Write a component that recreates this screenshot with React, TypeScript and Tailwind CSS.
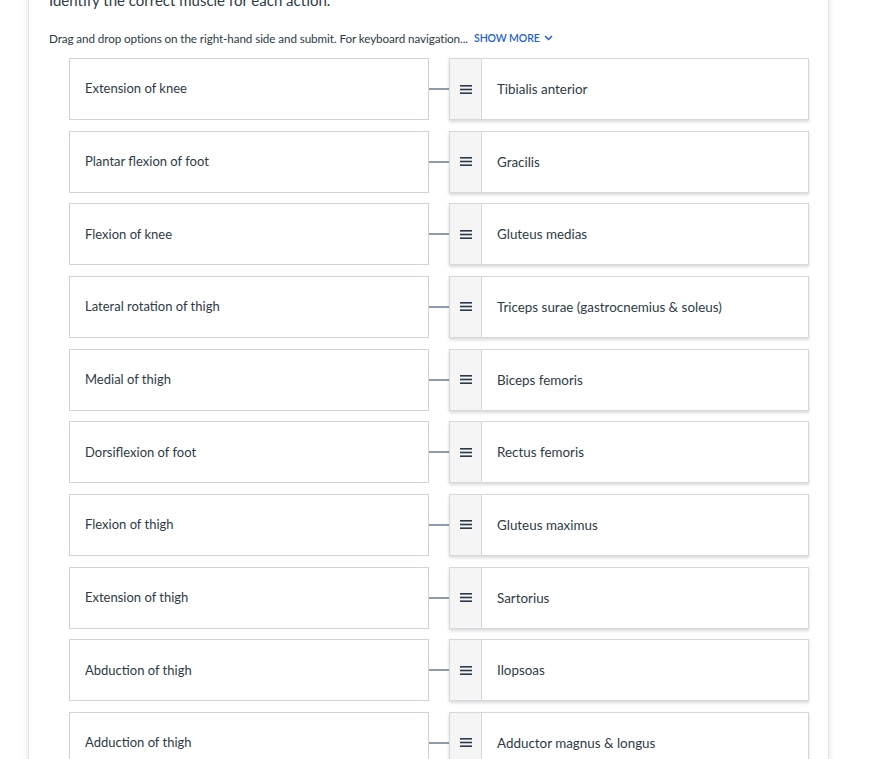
import React from 'react';

const PAIRS = [
  ['Extension of knee', 'Tibialis anterior'],
  ['Plantar flexion of foot', 'Gracilis'],
  ['Flexion of knee', 'Gluteus medias'],
  ['Lateral rotation of thigh', 'Triceps surae (gastrocnemius & soleus)'],
  ['Medial of thigh', 'Biceps femoris'],
  ['Dorsiflexion of foot', 'Rectus femoris'],
  ['Flexion of thigh', 'Gluteus maximus'],
  ['Extension of thigh', 'Sartorius'],
  ['Abduction of thigh', 'Ilopsoas'],
  ['Adduction of thigh', 'Adductor magnus & longus'],
];

function Handle() {
  return (
    <svg width="12" height="9" viewBox="0 0 12 9" className="block">
      <rect x="0" y="0" width="12" height="1.6" fill="#2b3a4a" />
      <rect x="0" y="3.7" width="12" height="1.6" fill="#2b3a4a" />
      <rect x="0" y="7.4" width="12" height="1.6" fill="#2b3a4a" />
    </svg>
  );
}

export default function App() {
  return (
    <div
      className="min-h-[759px] bg-white overflow-hidden"
      style={{ fontFamily: 'Lato, "Noto Sans", sans-serif' }}
    >
      <div className="ml-[28px] w-[801px] -mt-[10px] h-[800px] bg-white border-x border-[#e3e3e3] shadow-[0_0_6px_rgba(0,0,0,0.12)] pl-[20px]">
        <h2 className="text-[15px] leading-[20px] text-[#2d3b48]">
          Identify the correct muscle for each action.
        </h2>
        <div className="mt-[20px] flex items-center text-[11.7px] leading-[16px] text-[#2d3b48] tracking-[-0.1px]">
          <span>Drag and drop options on the right-hand side and submit. For keyboard navigation...</span>
          <span className="ml-[6px] flex items-center font-semibold text-[#1f5fd0] text-[10.5px]">
            SHOW MORE
            <svg width="9" height="6" viewBox="0 0 9 6" className="ml-[4px]">
              <path d="M1 1l3.5 3.5L8 1" fill="none" stroke="#1f5fd0" strokeWidth="1.5" />
            </svg>
          </span>
        </div>
        <div className="mt-[12px] ml-[20px] flex flex-col gap-[10.66px]">
          {PAIRS.map(([left, right]) => (
            <div key={left} className="flex items-center h-[62px]">
              <div className="w-[360px] h-full border border-[#cfd4d9] bg-white flex items-center pl-[15px] text-[13px] text-[#2d3b48]">
                {left}
              </div>
              <div className="w-[20px] h-[2px] bg-[#8d9baa]" />
              <div className="w-[360px] h-full border border-[#d5d9dd] bg-white flex shadow-[0_2px_3px_rgba(0,0,0,0.15)]">
                <div className="w-[32px] h-full bg-[#f5f5f5] border-r border-[#d5d9dd] flex items-center justify-center">
                  <Handle />
                </div>
                <div className="flex items-center pl-[15px] text-[13.4px] text-[#2d3b48]">{right}</div>
              </div>
            </div>
          ))}
        </div>
      </div>
    </div>
  );
}
